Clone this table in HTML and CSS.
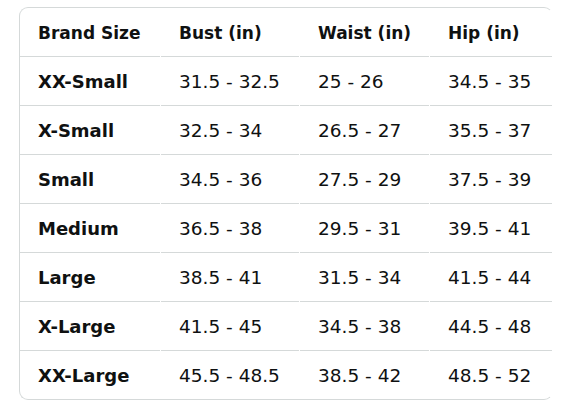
FILE: index.html
```html
<!DOCTYPE html>
<html lang="en">
<head>
<meta charset="utf-8">
<title>Size chart</title>
<link rel="stylesheet" href="styles.css">
</head>
<body>
<div class="page">
  <div class="card">
    <table class="chart">
      <colgroup>
        <col class="c1"><col class="c2"><col class="c3"><col class="c4">
      </colgroup>
      <thead>
        <tr><th>Brand Size</th><th>Bust (in)</th><th>Waist (in)</th><th>Hip (in)</th></tr>
      </thead>
      <tbody>
        <tr><th>XX-Small</th><td>31.5 - 32.5</td><td>25 - 26</td><td>34.5 - 35</td></tr>
        <tr><th>X-Small</th><td>32.5 - 34</td><td>26.5 - 27</td><td>35.5 - 37</td></tr>
        <tr><th>Small</th><td>34.5 - 36</td><td>27.5 - 29</td><td>37.5 - 39</td></tr>
        <tr><th>Medium</th><td>36.5 - 38</td><td>29.5 - 31</td><td>39.5 - 41</td></tr>
        <tr><th>Large</th><td>38.5 - 41</td><td>31.5 - 34</td><td>41.5 - 44</td></tr>
        <tr><th>X-Large</th><td>41.5 - 45</td><td>34.5 - 38</td><td>44.5 - 48</td></tr>
        <tr><th>XX-Large</th><td>45.5 - 48.5</td><td>38.5 - 42</td><td>48.5 - 52</td></tr>
      </tbody>
    </table>
  </div>
</div>
</body>
</html>
```
FILE: styles.css
```css
html, body {
  margin: 0;
  padding: 0;
  background: #ffffff;
}
body {
  font-family: "DejaVu Sans", "Liberation Sans", sans-serif;
  color: #0f1111;
  font-size: 17px;
}
.page {
  padding: 7px 0 0 19px;
}
.card {
  width: 532px;
  border: 1px solid #d5d9d9;
  border-right-color: transparent;
  border-radius: 9px;
  overflow: hidden;
}
.chart {
  table-layout: fixed;
  border-collapse: separate;
  border-spacing: 1px 0;
  margin-left: -1px;
  width: 534px;
}
.c1 { width: 140px; }
.c2 { width: 138px; }
.c3 { width: 129px; }
.c4 { width: 122px; }
.chart th,
.chart td {
  text-align: left;
  padding: 14px 0 13px 18px;
  line-height: 21px;
  border-bottom: 1px solid #d5d9d9;
  white-space: nowrap;
}
.chart thead th {
  font-size: 17px;
  font-weight: bold;
  padding-top: 15px;
  padding-bottom: 12px;
}
.chart tbody th {
  font-size: 18px;
  font-weight: bold;
}
.chart td {
  font-size: 18.5px;
  font-weight: normal;
}
.chart tbody tr:last-child th,
.chart tbody tr:last-child td {
  border-bottom: none;
}
```
